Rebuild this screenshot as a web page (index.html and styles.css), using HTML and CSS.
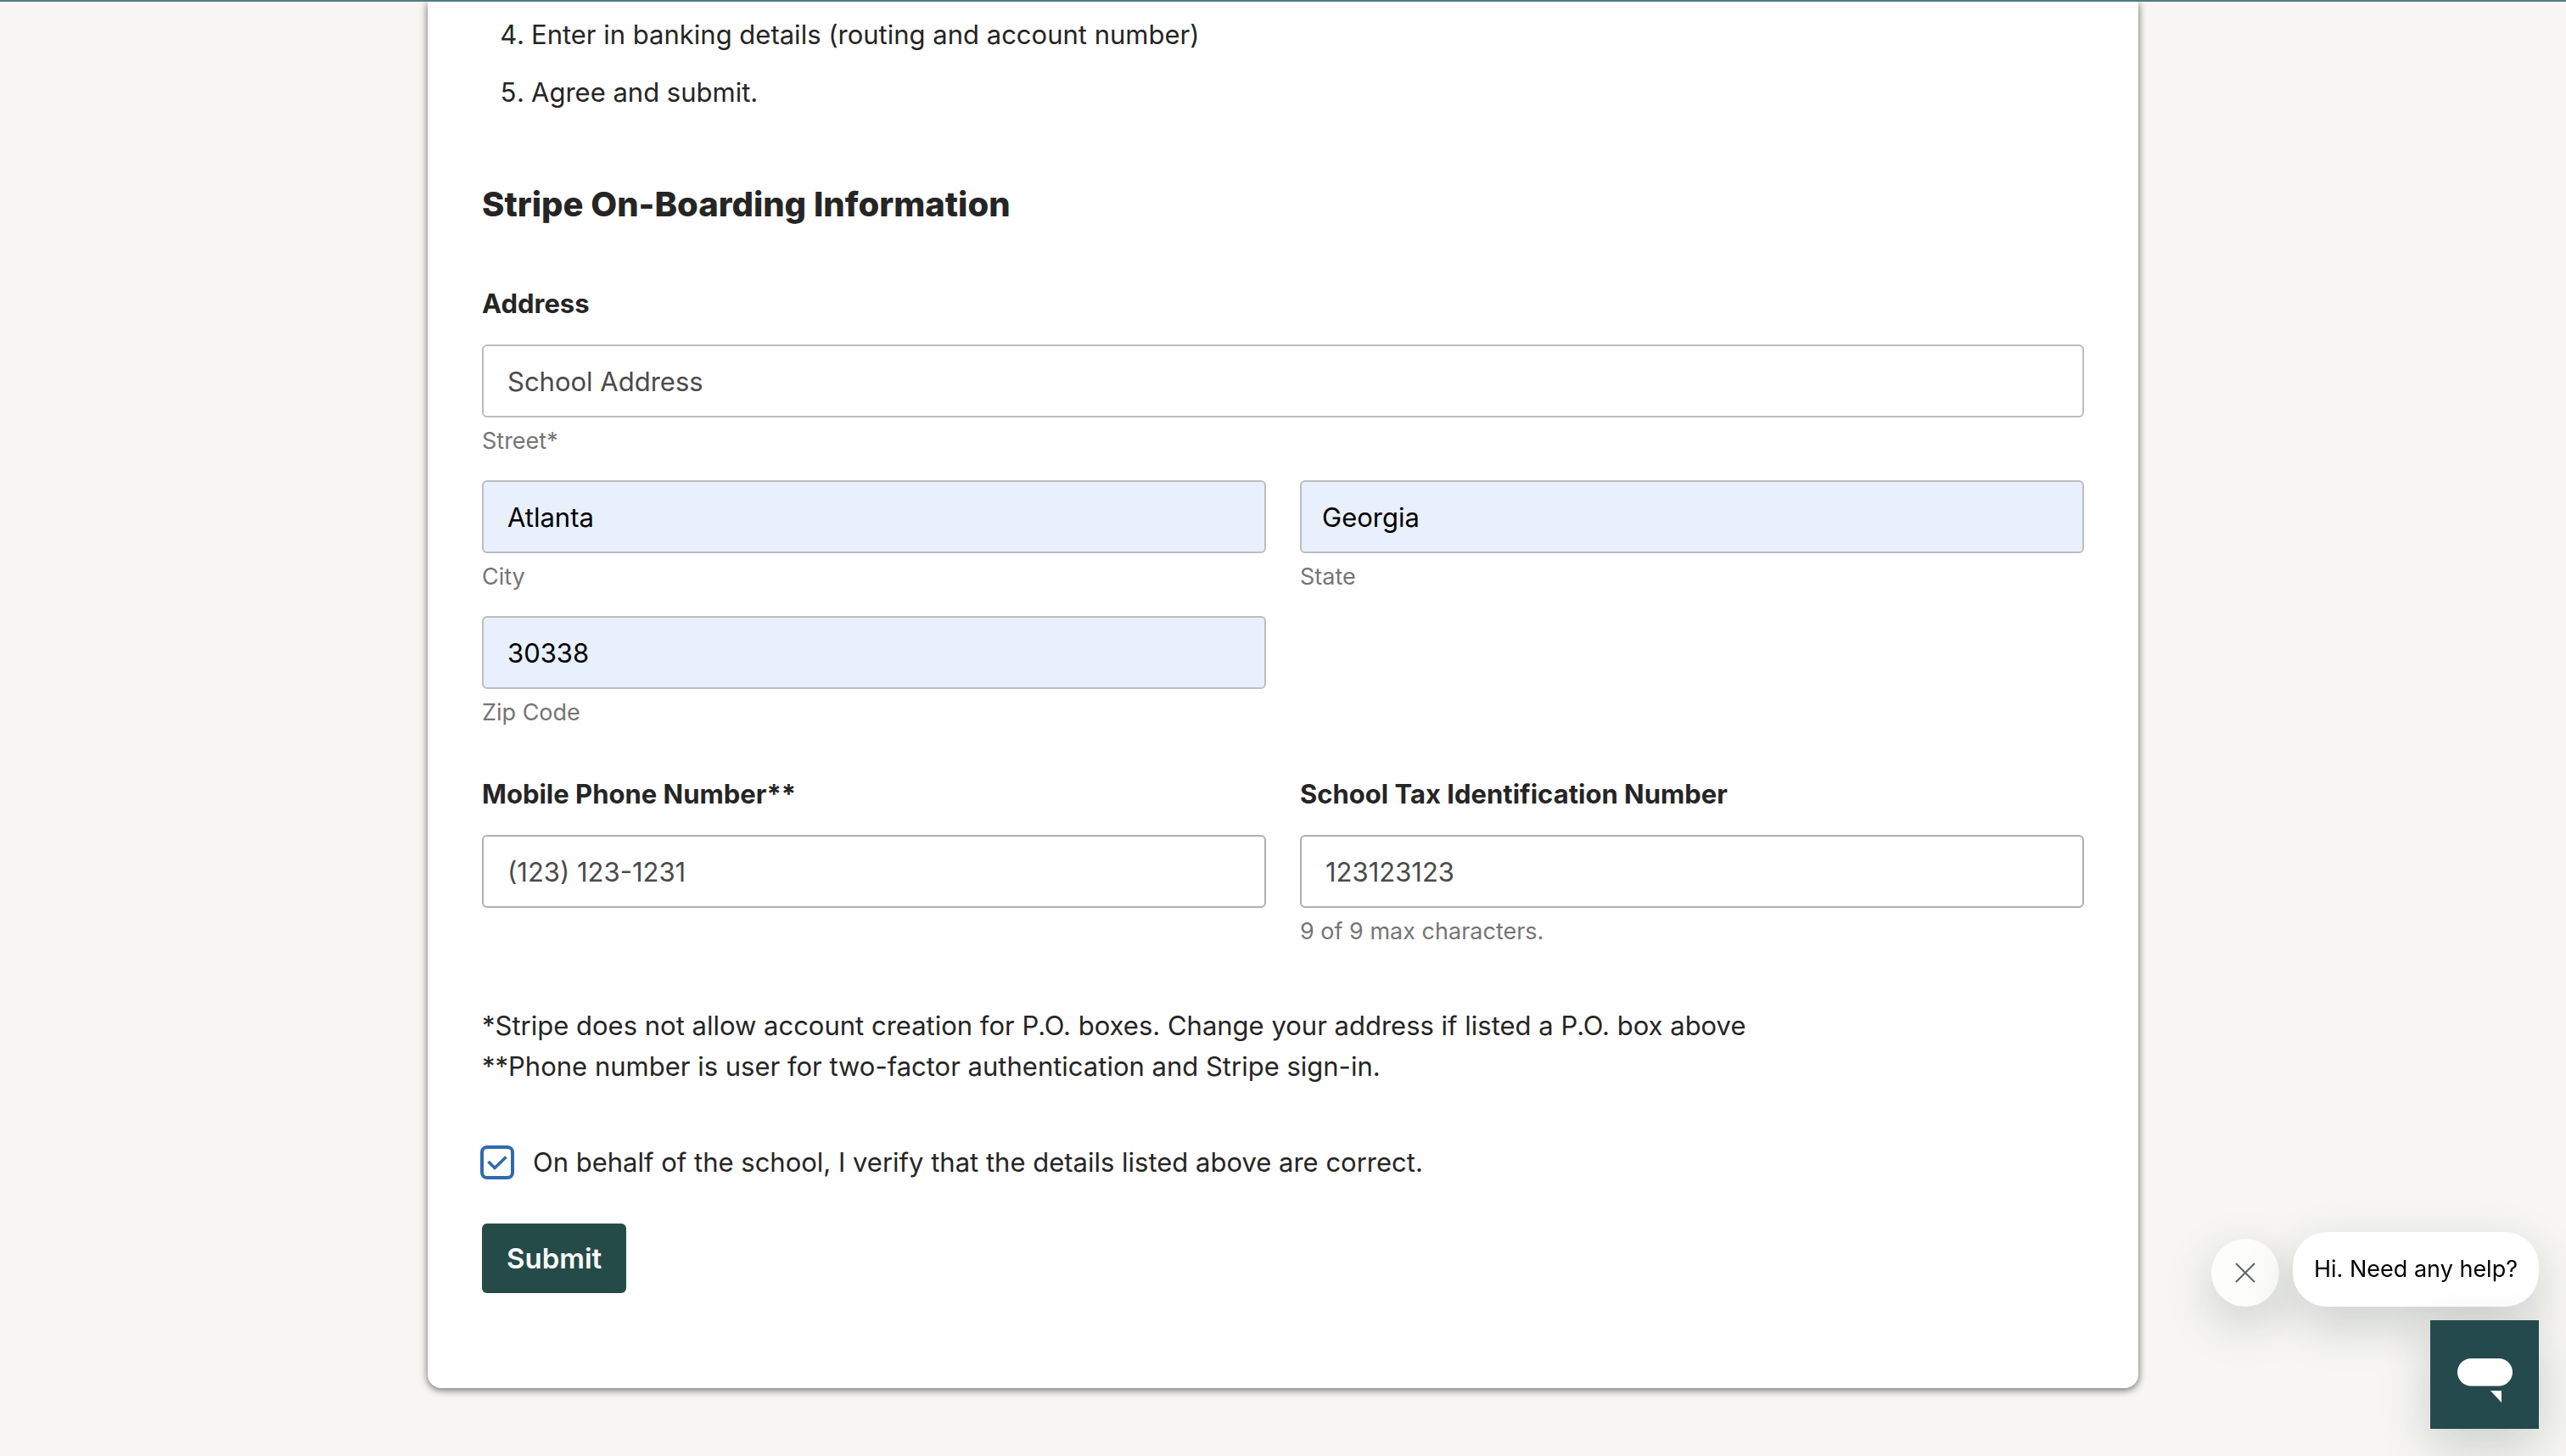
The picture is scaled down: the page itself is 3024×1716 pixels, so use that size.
FILE: index.html
```html
<!DOCTYPE html>
<html lang="en">
<head>
<meta charset="utf-8">
<meta name="viewport" content="width=device-width, initial-scale=1">
<title>Stripe On-Boarding</title>
<link rel="stylesheet" href="styles.css">
</head>
<body>
<div class="topbar"></div>
<main class="card">
  <ol class="steps" start="4">
    <li>Enter in banking details (routing and account number)</li>
    <li>Agree and submit.</li>
  </ol>
  <h2 class="title">Stripe On-Boarding Information</h2>
  <form class="form">
    <fieldset class="group">
      <legend class="label">Address</legend>
      <div class="grid">
        <div class="field field-wide">
          <input class="input" id="street" type="text" value="School Address">
          <label class="hint" for="street">Street*</label>
        </div>
        <div class="field">
          <input class="input input-filled" id="city" type="text" value="Atlanta">
          <label class="hint" for="city">City</label>
        </div>
        <div class="field">
          <input class="input input-filled input-state" id="state" type="text" value="Georgia">
          <label class="hint" for="state">State</label>
        </div>
        <div class="field">
          <input class="input input-filled" id="zip" type="text" value="30338">
          <label class="hint" for="zip">Zip Code</label>
        </div>
      </div>
    </fieldset>
    <div class="grid contact">
      <div class="field">
        <label class="label" for="phone">Mobile Phone Number**</label>
        <input class="input input-strong" id="phone" type="tel" value="(123) 123-1231">
      </div>
      <div class="field">
        <label class="label" for="tax">School Tax Identification Number</label>
        <input class="input input-strong" id="tax" type="text" maxlength="9" value="123123123" aria-describedby="tax-hint">
        <span class="hint" id="tax-hint">9 of 9 max characters.</span>
      </div>
    </div>
    <p class="notes">*Stripe does not allow account creation for P.O. boxes. Change your address if listed a P.O. box above<br>**Phone number is user for two-factor authentication and Stripe sign-in.</p>
    <div class="consent">
      <input class="checkbox" id="verify" type="checkbox" checked>
      <label for="verify">On behalf of the school, I verify that the details listed above are correct.</label>
    </div>
    <button class="submit" type="submit">Submit</button>
  </form>
</main>
<aside class="chat" aria-label="Chat">
  <div class="chat-row">
    <button class="chat-close" type="button" aria-label="Close message">
      <svg width="24" height="24" viewBox="0 0 24 24" fill="none" stroke="#5e6267" stroke-width="2" aria-hidden="true"><path d="M1 1 23 23M23 1 1 23"/></svg>
    </button>
    <button class="chat-message" type="button">Hi. Need any help?</button>
  </div>
  <button class="chat-launcher" type="button" aria-label="Open chat">
    <svg width="128" height="128" viewBox="0 0 128 128" fill="#fff" aria-hidden="true"><rect x="32" y="45" width="65" height="32.500" rx="16.250"/><path d="M71 83H84V97Z"/></svg>
  </button>
</aside>
</body>
</html>
```
FILE: styles.css
```css
* {
  box-sizing: border-box;
}

body {
  margin: 0;
  background: #f7f6f2;
  color: #252525;
  font: 400 31px/48px Inter, "Liberation Sans", sans-serif;
}

input,
button {
  font: inherit;
}

.topbar {
  position: relative;
  z-index: 1;
  height: 2px;
  background: #4d7e82;
}

.card {
  width: calc(100% * 2 / 3);
  margin: 0 auto 80px;
  padding: 15px 64px 112px;
  border-radius: 0 0 16px 16px;
  background: #fff;
  box-shadow: 0 2px 10px rgba(0, 0, 0, 0.6);
}

.steps {
  display: flex;
  flex-direction: column;
  gap: 20px;
  margin: 0;
  padding-left: 58px;
}

.title {
  margin: 84px 0 69px;
  font-size: 40px;
  font-weight: 800;
  line-height: 48px;
}

.form {
  display: flex;
  flex-direction: column;
}

.group {
  min-width: 0;
  margin: 0;
  padding: 0;
  border: 0;
}

.label {
  padding: 0;
  margin-bottom: 24px;
  font-weight: 700;
}

.grid {
  display: grid;
  grid-template-columns: 1fr 1fr;
  gap: 26px 40px;
}

.contact {
  margin-top: 52px;
}

.field {
  display: flex;
  flex-direction: column;
}

.field-wide {
  grid-column: 1 / -1;
}

.input {
  width: 100%;
  height: 86px;
  padding: 0 28px;
  border: 2px solid #bdbdbd;
  border-radius: 6px;
  background: #fff;
  color: #4a4a4a;
}

.input-filled {
  background: #e8effd;
  color: #000;
}

.input-state {
  padding: 0 24px;
}

.input-strong {
  border-color: #b0b0b0;
}

.hint {
  margin-top: 8px;
  color: #757575;
  font-size: 27px;
  line-height: 40px;
}

.notes {
  margin: 67px 0 65px;
}

.consent {
  display: flex;
  align-items: center;
  gap: 24px;
}

.checkbox {
  appearance: none;
  flex: none;
  width: 36px;
  height: 36px;
  margin: 0;
  border: 2px solid #2f6bab;
  border-radius: 6px;
  background: #fff url("data:image/svg+xml,%3Csvg xmlns='http://www.w3.org/2000/svg' viewBox='0 0 36 36' fill='none' stroke='%232f6bab' stroke-width='3.6'%3E%3Cpath d='M7.500 17 15 24.500 28.500 11.500'/%3E%3C/svg%3E") border-box;
  box-shadow: 0 0 0 2px #2f6bab;
}

.submit {
  align-self: flex-start;
  height: 82px;
  margin-top: 48px;
  padding: 0 29px;
  border: 0;
  border-radius: 6px;
  background: #254b49;
  color: #fff;
  font-size: 33px;
  font-weight: 600;
}

.chat {
  position: fixed;
  right: 32px;
  bottom: 32px;
  display: flex;
  flex-direction: column;
  align-items: flex-end;
  gap: 16px;
}

.chat-row {
  display: flex;
  align-items: flex-end;
  gap: 16px;
}

.chat-row button,
.chat-launcher {
  border: 0;
  box-shadow: 0 20px 60px rgba(25, 50, 50, 0.2);
}

.chat-close {
  display: grid;
  place-items: center;
  width: 80px;
  height: 80px;
  padding: 0;
  border-radius: 50%;
  background: #fdfdfc;
}

.chat-message {
  height: 88px;
  padding: 0 25px;
  border-radius: 40px;
  background: #fff;
  color: #000;
  font-size: 27px;
}

.chat-launcher {
  display: block;
  width: 128px;
  height: 128px;
  padding: 0;
  background: #254a4d;
}
```
